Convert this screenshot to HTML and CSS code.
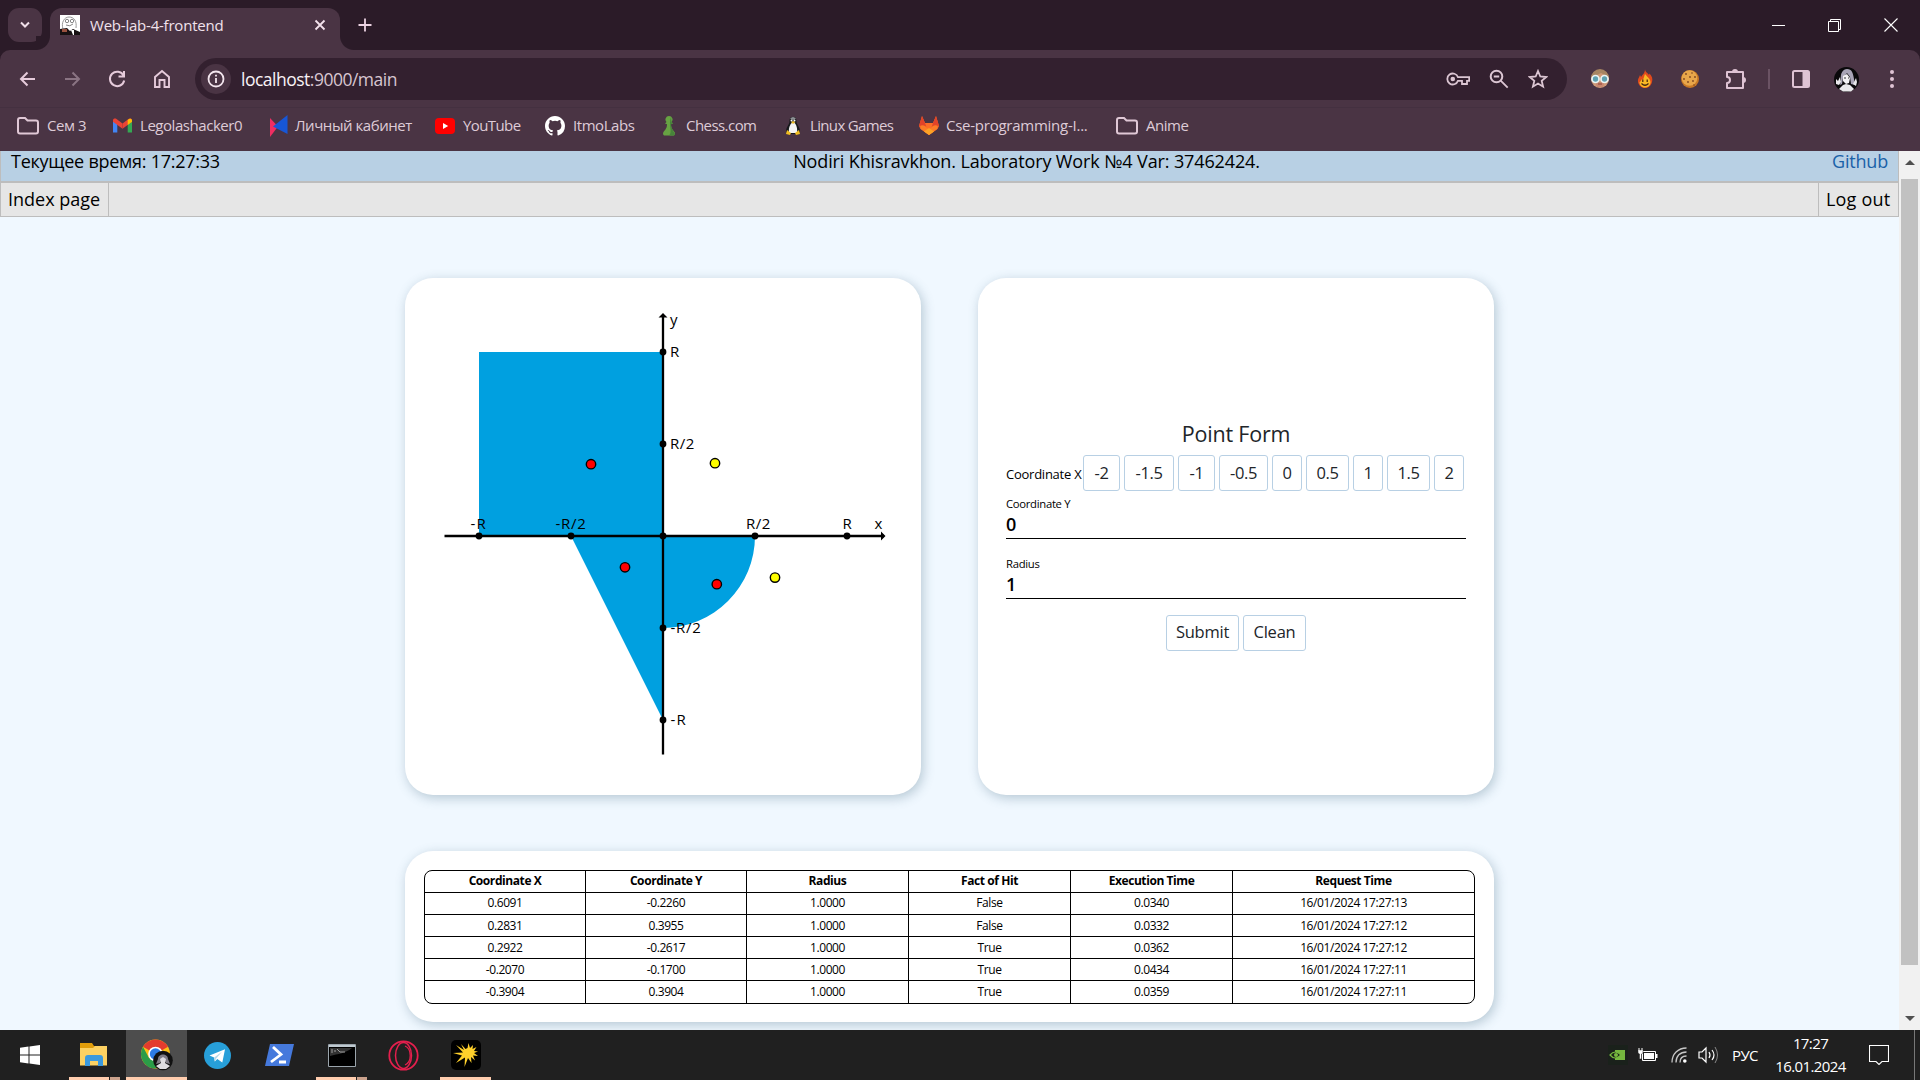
FILE: index.html
```html
<!DOCTYPE html>
<html lang="ru">
<head>
<meta charset="utf-8">
<title>Web-lab-4-frontend</title>
<link rel="stylesheet" href="styles.css">
</head>
<body>
<div class="tabstrip">
  <div class="tab-search"><svg width="12" height="8" viewBox="0 0 12 8"><path d="M2 1.500l4 4 4-4" fill="none" stroke="#f0dfe9" stroke-width="2"/></svg></div>
  <div class="tab">
    <svg class="favicon" width="20" height="20" viewBox="0 0 20 20"><path fill="#fff" d="M0 0h20v20H0z"/><path d="M3 14C1 8 4 2 9 2s8 4 7 11" fill="none" stroke="#999" stroke-width="1"/><circle cx="7" cy="6" r="1.700" fill="none" stroke="#888"/><circle cx="12" cy="6" r="1.700" fill="none" stroke="#888"/><path d="M6 10q4 2 7-1" stroke="#888" fill="none"/><path d="M0 14l7-1 3 3 3-2 7 3v3H0z" fill="#171113"/><path d="M2 14h5v3H2z" fill="#99513f"/><path d="M11 15l2 5h1v-5z" fill="#fff"/></svg>
    <span class="tab-title">Web-lab-4-frontend</span>
    <svg class="tab-close" width="12" height="12" viewBox="0 0 12 12"><path d="M1.500 1.500l9 9M10.500 1.500l-9 9" stroke="#f3e2ec" stroke-width="1.800"/></svg>
  </div>
  <svg class="new-tab" width="14" height="14" viewBox="0 0 14 14"><path d="M7 .5v13M.5 7h13" stroke="#ecd3e2" stroke-width="1.800"/></svg>
  <div class="window-buttons">
    <svg width="13" height="13" viewBox="0 0 13 13"><path d="M0 6.500h13" stroke="#fff"/></svg>
    <svg width="13" height="13" viewBox="0 0 13 13"><path d="M.5 2.500h10v10H.5zM2.500 2.500v-2h10v10h-2" fill="none" stroke="#fff"/></svg>
    <svg width="14" height="14" viewBox="0 0 14 14"><path d="M.5 .5l13 13M13.500 .5l-13 13" stroke="#fff" stroke-width="1.100"/></svg>
  </div>
</div>
<div class="toolbar">
  <div class="nav-icons">
    <svg width="20" height="20" viewBox="0 0 20 20"><path d="M18 10H4M10.500 3.500L4 10l6.500 6.500" fill="none" stroke="#e6cbdb" stroke-width="2"/></svg>
    <svg width="20" height="20" viewBox="0 0 20 20"><path d="M3 10h14M10.500 3.500L17 10l-6.500 6.500" fill="none" stroke="#8a7483" stroke-width="2"/></svg>
    <svg width="20" height="20" viewBox="0 0 20 20"><path d="M16.500 6.500A7.200 7.200 0 1 0 17.200 11.500M17 2v5.500h-5.500" fill="none" stroke="#e6cbdb" stroke-width="2"/></svg>
    <svg width="20" height="20" viewBox="0 0 20 20"><path d="M3 18V8l7-6 7 6v10h-4.500v-7h-5v7z" fill="none" stroke="#e6cbdb" stroke-width="1.900"/></svg>
  </div>
  <div class="omnibox">
    <div class="site-info"><svg width="18" height="18" viewBox="0 0 18 18"><circle cx="9" cy="9" r="7.500" fill="none" stroke="#f3e6ee" stroke-width="1.800"/><path d="M9 8v5M9 4.700v1.900" stroke="#f3e6ee" stroke-width="1.800"/></svg></div>
    <span class="url">localhost<span class="url-path">:9000/main</span></span>
    <div class="omni-icons">
      <svg width="24" height="16" viewBox="0 0 24 16"><path d="M12 6.200a5.500 5.500 0 1 0 0 3.600h4V13h5v-3.200h2.200V6.200z" fill="none" stroke="#dcc6d3" stroke-width="1.800"/><circle cx="6.800" cy="8" r="2.300" fill="#dcc6d3"/></svg>
      <svg width="20" height="20" viewBox="0 0 20 20"><circle cx="7.500" cy="7.500" r="5.800" fill="none" stroke="#dcc6d3" stroke-width="2"/><path d="M11.700 11.700l7 7M4.800 7.500h5.400" stroke="#dcc6d3" stroke-width="1.800"/></svg>
      <svg width="20" height="20" viewBox="0 0 20 20"><path d="M10 2l2.300 5.500 5.900.5-4.500 3.900 1.400 5.800L10 14.600l-5.100 3.100 1.400-5.800L1.800 8l5.900-.5z" fill="none" stroke="#dcc6d3" stroke-width="1.800"/></svg>
    </div>
  </div>
  <div class="extensions">
    <svg width="20" height="20" viewBox="0 0 20 20"><circle cx="10" cy="10" r="9" fill="#cf9a78"/><path d="M1 9a9 9 0 0 1 18 0l-2-2-6-3-8 4z" fill="#a78562"/><path d="M5 13h10l-2 5H7z" fill="#c7876f"/><circle cx="5.500" cy="10" r="3.500" fill="#5fa1b1" stroke="#e9f4f4" stroke-width="1.700"/><circle cx="14.500" cy="10" r="3.500" fill="#5fa1b1" stroke="#e9f4f4" stroke-width="1.700"/><path d="M8 15h4" stroke="#8d4138"/></svg>
    <svg width="20" height="20" viewBox="0 0 20 20"><path d="M10 0c0 3 3 4 4 6l.5-1.500C17 7 18 10 17 13c-1 4-4 6-7 6s-6-2-7-6c-.5-3 1-4 2-7l1 2c2-3 4-4 4-8z" fill="#e04a1c"/><path d="M10 5c3 4 6 5 5.500 9-.5 3-3 4.500-5.500 4.500S4.500 17 4.500 13c1 0 1.500-2 2.500-3l1 1z" fill="#f8b825"/><path d="M7.800 10.500v2.500M12.200 10.500v2.500M6.500 14.500q3.500 3.500 7 0" stroke="#412510" stroke-width="1.200" fill="none"/></svg>
    <svg width="20" height="20" viewBox="0 0 20 20"><circle cx="10" cy="10" r="9" fill="#c87825"/><circle cx="9.500" cy="9" r="7.800" fill="#e8a64a"/><g fill="#7d4520"><circle cx="6" cy="5" r=".9"/><circle cx="12" cy="4" r=".8"/><circle cx="10" cy="8" r=".9"/><circle cx="15" cy="8" r=".9"/><circle cx="4" cy="10" r=".9"/><circle cx="8" cy="13" r=".9"/><circle cx="13" cy="12" r=".9"/><circle cx="14" cy="16" r=".8"/></g></svg>
    <svg width="22" height="22" viewBox="0 0 22 22"><path d="M2 4h16v16H2v-5a3 3 0 0 0 0-6z" fill="none" stroke="#dfc3d4" stroke-width="2" stroke-linejoin="round"/><path d="M7 4a3 3 0 0 1 6 0zM18 9a3 3 0 0 1 0 6z" fill="#dfc3d4"/></svg>
    <span class="divider"></span>
    <svg width="18" height="18" viewBox="0 0 18 18"><rect x="1" y="1" width="16" height="16" rx="1.500" fill="none" stroke="#dfc3d4" stroke-width="2"/><path d="M10.500 1H17v16h-6.500z" fill="#dfc3d4"/></svg>
    <svg class="avatar" width="25" height="25" viewBox="0 0 25 25"><circle cx="12.500" cy="12.500" r="12.500" fill="#0a090b"/><path d="M7 13C6 6 9 2 13 2c5 0 6 4 7 10l1 6-4-1-1-7-3-4-4 5-1 6-2 1z" fill="#a8a4b6"/><path d="M9 9l4-2 3 4-1 5-3 1-3-3z" fill="#f2f1f4"/><path d="M5 22l4-4 3-1 4 1 4 4-3 2.500H9zM2 12l2 2 2-4 1 5-2 3-3-1zM22 11l1 4-1 4-3-2z" fill="#e9e8eb"/><path d="M10 11h2M14 11h1" stroke="#333"/></svg>
    <svg class="kebab" width="4" height="18" viewBox="0 0 4 18"><g fill="#dfc3d4"><circle cx="2" cy="2" r="2"/><circle cx="2" cy="9" r="2"/><circle cx="2" cy="16" r="2"/></g></svg>
  </div>
</div>
<div class="bookmarks">
  <div class="bm bm1"><svg width="22" height="18" viewBox="0 0 22 18"><path d="M1 3a2 2 0 0 1 2-2h5l2.500 2.500H19a2 2 0 0 1 2 2V14.500a2 2 0 0 1-2 2H3a2 2 0 0 1-2-2z" fill="none" stroke="#e0c8d6" stroke-width="2"/></svg><span>Сем 3</span></div>
  <div class="bm bm2"><svg width="19" height="15" viewBox="0 0 19 15"><path d="M0 2v12.500h4.300V5.500z" fill="#4285f4"/><path d="M19 2v12.500h-4.300V5.500z" fill="#34a853"/><path d="M0 2.500C0 .5 2 0 3.500 1l6 4.500v5.300L0 3.700z" fill="#ea4335"/><path d="M19 2.500C19 .5 17 0 15.500 1l-6 4.500v5.300L19 3.700z" fill="#ea4335"/><path d="M14.700 2v5L19 3.700C19.300.5 17 0 14.700 2z" fill="#fbbc04"/></svg><span>Legolashacker0</span></div>
  <div class="bm bm3"><svg width="19" height="22" viewBox="0 0 19 22"><path d="M1 3l8 8.500L1 22z" fill="#f02d62"/><path d="M18.500 0v19L4 11.500z" fill="#1756d6"/></svg><span>Личный кабинет</span></div>
  <div class="bm bm4"><svg width="20" height="16" viewBox="0 0 20 16"><rect width="20" height="16" rx="4" fill="#f00"/><path d="M8 5l5.200 3L8 11z" fill="#fff"/></svg><span>YouTube</span></div>
  <div class="bm bm5"><svg width="20" height="20" viewBox="0 0 16 16"><path fill="#fff" d="M8 0C3.580 0 0 3.580 0 8c0 3.540 2.290 6.530 5.470 7.590.4.070.55-.17.55-.38 0-.19-.01-.82-.01-1.490-2.010.37-2.530-.49-2.690-.94-.09-.23-.48-.94-.82-1.130-.28-.15-.68-.52-.01-.53.63-.01 1.080.58 1.230.82.72 1.210 1.870.87 2.330.66.07-.52.28-.87.51-1.070-1.780-.2-3.640-.89-3.640-3.950 0-.87.31-1.590.82-2.150-.08-.2-.36-1.020.08-2.120 0 0 .67-.21 2.200.82a7.600 7.600 0 0 1 4 0c1.530-1.040 2.200-.82 2.200-.82.44 1.100.16 1.920.08 2.120.51.56.82 1.270.82 2.150 0 3.070-1.870 3.750-3.650 3.950.29.25.54.73.54 1.480 0 1.070-.01 1.930-.01 2.200 0 .21.15.46.55.38A8 8 0 0 0 16 8c0-4.420-3.580-8-8-8z"/></svg><span>ItmoLabs</span></div>
  <div class="bm bm6"><svg width="14" height="20" viewBox="0 0 14 20"><path d="M7 0a3.500 3.500 0 0 1 2.500 6l1.500 1.500-2 .8c0 4 1.500 5 3.500 7.700.8 1.200.5 3-.5 3.500H2c-1-.5-1.300-2.300-.5-3.500C3.500 13.300 5 12.300 5 8.300l-2-.8L4.500 6A3.500 3.500 0 0 1 7 0z" fill="#67a343"/><path d="M9 1l.5 5 1.500 1.500-2 .8c0 4 2 6 4 9.700l-1 1.500H7C11 16 6 9 9 1z" fill="#47833a"/></svg><span>Chess.com</span></div>
  <div class="bm bm7"><svg width="16" height="18" viewBox="0 0 16 18"><path d="M8 0c3 0 3.500 2 3.500 5 0 2 3.500 5 3.500 10l-3 2H4l-3-2C1 10 4.500 7 4.500 5 4.500 2 5 0 8 0z" fill="#16191b"/><path d="M8 5c2 0 5 5 4 11H4C3 10 6 6 8 5z" fill="#f5f5f5"/><path d="M6 5l2-1 2.500 1L8 7z" fill="#efbd2a"/><path d="M5 1.500q3-3 6 0L8 3z" fill="#8e9296"/><circle cx="6.500" cy="3.500" r="1" fill="#fff"/><circle cx="9.500" cy="3.500" r="1" fill="#fff"/><path d="M2 13l4 3-1 2-4-1zM14 13l-4 3 1 2 4-1z" fill="#f1bd22"/></svg><span>Linux Games</span></div>
  <div class="bm bm8"><svg width="20" height="19" viewBox="0 0 20 19"><path d="M3 0l3 7h8l3-7 3 10-1.500 3L10 19l-8.500-6L0 10z" fill="#fc6d26"/><path d="M3 0l3 7 4 12L0 10zM17 0l-3 7-4 12 10-9z" fill="#e24329"/><path d="M1 10c3-2 6 0 9 4 3-4 6-6 9-4l-1 3-8 6-8-6z" fill="#fc7d26"/><path d="M5 15.500L10 12l5 3.500-5 3.500z" fill="#fca326"/></svg><span>Cse-programming-I...</span></div>
  <div class="bm bm9"><svg width="22" height="18" viewBox="0 0 22 18"><path d="M1 3a2 2 0 0 1 2-2h5l2.500 2.500H19a2 2 0 0 1 2 2V14.500a2 2 0 0 1-2 2H3a2 2 0 0 1-2-2z" fill="none" stroke="#e0c8d6" stroke-width="2"/></svg><span>Anime</span></div>
</div>
<div class="viewport">
  <div class="page">
    <header class="site-header">
      <span class="clock">Текущее время: 17:27:33</span>
      <span class="author">Nodiri Khisravkhon. Laboratory Work №4 Var: 37462424.</span>
      <a class="github">Github</a>
    </header>
    <nav class="menu"><a class="menu-index">Index page</a><a class="menu-logout">Log out</a></nav>
    <main>
      <section class="card plot">
        <svg width="516" height="517" viewBox="405 278 516 517">
          <path d="M479 352h184v184H479zM571 536h92v184zM663 536h92a92 92 0 0 1-92 92z" fill="#00a0e0"/>
          <path d="M444.500 536H884M663 754.500V315" stroke="#000" stroke-width="2.300"/>
          <path d="M881 531.500l4.500 4.500-4.500 4.500zM658.500 317.500l4.500-4.500 4.500 4.500z"/>
          <g><circle cx="479" cy="536" r="3.400"/><circle cx="571" cy="536" r="3.400"/><circle cx="663" cy="536" r="3.400"/><circle cx="755" cy="536" r="3.400"/><circle cx="847" cy="536" r="3.400"/><circle cx="663" cy="352" r="3.400"/><circle cx="663" cy="444" r="3.400"/><circle cx="663" cy="628" r="3.400"/><circle cx="663" cy="720" r="3.400"/></g>
          <g class="axis-text"><text x="470.500" y="529" textLength="15">-R</text><text x="555.500" y="529" textLength="30">-R/2</text><text x="746" y="529" textLength="24">R/2</text><text x="842.500" y="529">R</text><text x="874.500" y="529">x</text><text x="670" y="325">y</text><text x="670" y="357">R</text><text x="670" y="449" textLength="24">R/2</text><text x="670.500" y="633" textLength="30">-R/2</text><text x="670.500" y="725" textLength="15">-R</text></g>
          <g stroke="#000" stroke-width="1.400"><g fill="#f00"><circle cx="591" cy="464.200" r="4.700"/><circle cx="625" cy="567.300" r="4.700"/><circle cx="716.800" cy="584.200" r="4.700"/></g><g fill="#ff0"><circle cx="715" cy="463.200" r="4.700"/><circle cx="775" cy="577.600" r="4.700"/></g></g>
        </svg>
      </section>
      <section class="card form">
        <h1>Point Form</h1>
        <div class="x-row"><label>Coordinate X</label><div class="x-buttons"><button>-2</button><button>-1.5</button><button>-1</button><button>-0.5</button><button>0</button><button>0.5</button><button>1</button><button>1.5</button><button>2</button></div></div>
        <div class="field"><label>Coordinate Y</label><div class="value">0</div></div>
        <div class="field field-radius"><label>Radius</label><div class="value">1</div></div>
        <div class="actions"><button>Submit</button><button>Clean</button></div>
      </section>
      <section class="card results">
        <div class="table">
          <div class="row head"><b>Coordinate X</b><b>Coordinate Y</b><b>Radius</b><b>Fact of Hit</b><b>Execution Time</b><b>Request Time</b></div>
          <div class="row"><span>0.6091</span><span>-0.2260</span><span>1.0000</span><span>False</span><span>0.0340</span><span>16/01/2024 17:27:13</span></div>
          <div class="row"><span>0.2831</span><span>0.3955</span><span>1.0000</span><span>False</span><span>0.0332</span><span>16/01/2024 17:27:12</span></div>
          <div class="row"><span>0.2922</span><span>-0.2617</span><span>1.0000</span><span>True</span><span>0.0362</span><span>16/01/2024 17:27:12</span></div>
          <div class="row"><span>-0.2070</span><span>-0.1700</span><span>1.0000</span><span>True</span><span>0.0434</span><span>16/01/2024 17:27:11</span></div>
          <div class="row"><span>-0.3904</span><span>0.3904</span><span>1.0000</span><span>True</span><span>0.0359</span><span>16/01/2024 17:27:11</span></div>
        </div>
      </section>
    </main>
  </div>
  <div class="scrollbar">
    <svg width="10" height="5" viewBox="0 0 10 5"><path d="M0 5l5-5 5 5z" fill="#505050"/></svg>
    <div class="thumb"></div>
    <svg width="10" height="5" viewBox="0 0 10 5"><path d="M0 0l5 5 5-5z" fill="#505050"/></svg>
  </div>
</div>
<div class="taskbar">
  <div class="apps">
    <div class="app start"><svg width="20" height="20" viewBox="0 0 20 20"><path d="M0 2.800l8.500-1.200V9.500H0zM9.500 1.500L20 0v9.500H9.500zM0 10.500h8.500v8L0 17.300zM9.500 10.500H20V20L9.500 18.600z" fill="#fff"/></svg></div>
    <div class="app files open stacked"><svg width="28" height="24" viewBox="0 0 28 24"><path d="M0 0h12l2 3h13v10H0z" fill="#e19d0a"/><path d="M0 5h13l2-2h12v19.500H0z" fill="#fcd162"/><path d="M5 23v-8q0-3 3-3h12q3 0 3 3v8h-5v-5H10v5z" fill="#3b99dd"/></svg></div>
    <div class="app active"><svg width="34" height="32" viewBox="0 0 34 32"><circle cx="15.500" cy="15" r="14.500" fill="#fbc016"/><path d="M15.500 15L3 7.700A14.500 14.500 0 0 1 28 7.700z" fill="#e33b2e"/><path d="M3 7.700A14.500 14.500 0 0 0 15.500 29.500l7-10.500L9 19z" fill="#2b9c48"/><circle cx="15.500" cy="15" r="7.300" fill="#fff"/><circle cx="15.500" cy="15" r="5.700" fill="#2c7be5"/><circle cx="23" cy="21.500" r="9.800" fill="#111"/><path d="M18 20c0-6 10-6 10 0l2 5-4-1-3-5-3 5-4 1z" fill="#7f7c85"/><path d="M20 20l3-2 3 2-1 4h-4zM16 27l5-3h4l5 3-4 3h-6z" fill="#dedce0"/></svg></div>
    <div class="app"><svg width="27" height="27" viewBox="0 0 27 27"><circle cx="13.500" cy="13.500" r="13.500" fill="#279fd9"/><path d="M5.500 13.500L21 7.200l-2.700 13.300-5-3.500-2.500 2.500-.7-4z" fill="#fff"/><path d="M10.200 15.500l8-6-6 7-1.400 3z" fill="#b6d8e9"/></svg></div>
    <div class="app"><svg width="29" height="22" viewBox="0 0 29 22"><path d="M5 0h24l-5 22H0z" fill="#4579dc"/><path d="M8 3l8 7.500L6 18M14 18h7" fill="none" stroke="#fff" stroke-width="2.800"/></svg></div>
    <div class="app open stacked"><svg width="28" height="23" viewBox="0 0 28 23"><path d="M.5 .5h27v22H.5z" fill="#000" stroke="#9ba5ac"/><path d="M1 1h26v2H1z" fill="#bfc9d0"/><path d="M2 4h22C18 9 10 10 2 12z" fill="#333"/><path d="M3 6h2M3 8h2M7 6v2M9 5l3 3M12 8h5" stroke="#bbb" stroke-width=".8"/></svg></div>
    <div class="app"><svg width="31" height="31" viewBox="0 0 31 31"><g fill="none" stroke="#e41f4d"><circle cx="15.500" cy="15.500" r="14.200" stroke-width="1.800"/><ellipse cx="15.500" cy="15.500" rx="8" ry="13" stroke-width="1.500"/><path d="M17 6c7 3 7 16 0 19" stroke-width="1.300"/></g></svg></div>
    <div class="app open last"><svg width="30" height="30" viewBox="0 0 30 30"><rect width="30" height="30" rx="5" fill="#000"/><path d="M16.500 8l1-5 1.500 5 3-3-.5 4 4-2-2.500 4 4 .5-4 1.500 4 3-5-.5 2 5-4-3.500.5 6-3.500-5-3.500 9 .5-9.500L5 23l6-7.500-9-2.500 10-.5L5 5l8 5-3-6 4.500 5z" fill="#ffd02b"/></svg></div>
  </div>
  <div class="tray">
    <svg class="nv" width="20" height="20" viewBox="0 0 20 20"><path fill="#1a211b" d="M0 0h20v20H0z"/><path d="M7 5h10v10H7z" fill="#76b83f"/><path d="M2 10q5-6 11 0-6 6-11 0z" fill="#1d2519" stroke="#76b83f" stroke-width="1.200"/><circle cx="8" cy="10" r="2" fill="#76b83f"/></svg>
    <svg class="bat" width="20" height="14" viewBox="0 0 20 14"><path d="M4.500 3.500h13v9h-13z" fill="none" stroke="#fff"/><path d="M6 5h10v6H6zM18 6h1.500v4H18z" fill="#fff"/><path d="M0 2h5v3L3.500 6v5h-2V6L0 5z" fill="#fff" stroke="#202020" stroke-width=".5"/><path d="M1 0v3M4 0v3" stroke="#fff"/></svg>
    <svg class="wifi" width="16" height="16" viewBox="0 0 16 16"><g fill="none" stroke="#c8c8c8" stroke-width="1.300"><path d="M1 15.500C1 7 7 1 15.500 1M5 15.500C5 9 9 5 15.500 5M9 15.500Q9 9 15.500 9"/></g><circle cx="13.800" cy="14" r="1.800" fill="#fff"/></svg>
    <svg class="vol" width="21" height="18" viewBox="0 0 21 18"><path d="M1 6h3l4-4v14l-4-4H1z" fill="none" stroke="#fff" stroke-width="1.200"/><path d="M11 6q2 3 0 6M14 4q4 5 0 10" stroke="#fff" fill="none" stroke-width="1.200"/><path d="M17 1q5 8 0 16" stroke="#888" fill="none"/></svg>
    <span class="lang">РУС</span>
    <div class="datetime"><span class="time">17:27</span><span class="date">16.01.2024</span></div>
    <svg class="notif" width="20" height="20" viewBox="0 0 20 20"><path d="M.5 .5h19v16H13l-3 3-3-3H.5z" fill="none" stroke="#fff" stroke-width="1.100"/></svg>
  </div>
</div>
</body>
</html>
```
FILE: styles.css
```css
* { box-sizing: border-box; }
body { margin: 0; width: 1920px; height: 1080px; overflow: hidden; display: flex; flex-direction: column; background: #2b1b28; font-family: "Open Sans", "Noto Sans", sans-serif; color: #000; }
svg { display: block; flex: none; }
span, a, label, b, button { white-space: nowrap; }

.tabstrip { height: 50px; background: #2b1b28; display: flex; align-items: flex-start; }
.tab-search { width: 34px; height: 34px; margin: 8px 8px 0; border-radius: 11px; background: #4a3444; display: flex; align-items: center; justify-content: center; }
.tab { width: 290px; height: 42px; margin-top: 8px; padding: 0 14px 8px 10px; border-radius: 12px 12px 0 0; background: #4a3444; display: flex; align-items: center; position: relative; }
.tab::before, .tab::after { content: ""; position: absolute; bottom: 0; width: 14px; height: 14px; }
.tab::before { left: -14px; background: radial-gradient(circle at 0 0, #2b1b28 13.5px, #4a3444 14.5px); }
.tab::after { right: -14px; background: radial-gradient(circle at 100% 0, #2b1b28 13.5px, #4a3444 14.5px); }
.tab-title { margin-left: 10px; font-size: 15px; letter-spacing: -0.22px; color: #f1e2ec; flex: 1; }
.new-tab { margin: 18px 0 0 18px; }
.window-buttons { margin: 18px 22px 0 auto; display: flex; gap: 43px; align-items: center; }

.toolbar { height: 58px; padding: 8px 16px 0 17px; border-radius: 10px 10px 0 0; background: #4a3444; box-shadow: inset 0 -1px #443040; display: flex; align-items: flex-start; }
.nav-icons { height: 42px; width: 178px; display: flex; align-items: center; gap: 25px; }
.omnibox { width: 1372px; height: 42px; border-radius: 21px; background: #33202f; display: flex; align-items: center; padding: 0 19px 0 6px; }
.site-info { width: 30px; height: 30px; border-radius: 50%; background: #4a3444; display: flex; align-items: center; justify-content: center; }
.url { margin-left: 10px; font-size: 17.5px; letter-spacing: -0.5px; color: #f9f2f6; flex: 1; }
.url-path { color: #d8c6d1; }
.omni-icons { display: flex; align-items: center; gap: 19px; }
.extensions { height: 42px; flex: 1; padding-left: 23px; display: flex; align-items: center; gap: 25px; }
.divider { width: 2px; height: 20px; background: #6b5364; margin: 0 -3px 0 -4px; }
.avatar { margin-left: -1px; }
.kebab { margin-left: 6px; }

.bookmarks { height: 43px; background: #4a3444; display: flex; padding-left: 17px; color: #decbd7; font-size: 15px; }
.bm { height: 35px; display: flex; align-items: center; gap: 8px; letter-spacing: -0.45px; }
.bm span { padding-bottom: 2px; }
.bm1 { width: 96px; gap: 8px; } .bm2 { width: 156px; } .bm3 { width: 166px; gap: 7px; } .bm4 { width: 110px; } .bm5 { width: 116px; }
.bm4 span { letter-spacing: -0.6px; }
.bm6 { width: 123px; margin-left: 1px; gap: 10px; letter-spacing: -0.55px; } .bm7 { width: 134px; gap: 9px; letter-spacing: -0.65px; } .bm8 { width: 197px; gap: 7px; letter-spacing: -0.25px; }

.viewport { height: 879px; display: flex; background: #f0f8ff; }
.page { width: 1899px; height: 879px; }
.site-header { height: 32px; background: #b8d0e4; border: 1px solid #bdbdbd; border-width: 0 1px 2px; display: grid; grid-template-columns: 1fr auto 1fr; padding: 0 10px; font-size: 18px; line-height: 21px; }
.clock { letter-spacing: -0.25px; }
.author { letter-spacing: -0.13px; position: relative; left: 77px; }
.github { justify-self: end; color: #1a61a8; letter-spacing: -0.2px; }
.menu { height: 34px; background: #e6e6e6; border: 1px solid #bdbdbd; border-top: 0; display: flex; justify-content: space-between; font-size: 18px; line-height: 33px; }
.menu-index { width: 108px; padding-left: 7px; border-right: 1px solid #bdbdbd; letter-spacing: 0; }
.menu-logout { width: 80px; padding-left: 7px; border-left: 1px solid #bdbdbd; letter-spacing: 0.2px; }
main { width: 1089px; margin: 61px 0 0 405px; display: grid; grid-template-columns: 516px 516px; gap: 56px 57px; }
.card { background: #fff; border-radius: 28px; box-shadow: 2px 3px 12px rgba(60, 100, 120, .33); }
.plot { height: 517px; }
.axis-text { font-size: 15px; letter-spacing: -0.3px; }
.form { height: 517px; padding: 140px 28px 0; }
.form h1 { margin: 0; height: 37px; line-height: 32px; font-size: 21.5px; font-weight: 400; letter-spacing: -0.2px; text-align: center; color: #212529; }
.x-row { height: 36px; display: flex; align-items: center; }
.x-row label { width: 77px; padding-top: 2px; font-size: 13px; letter-spacing: -0.25px; }
.x-buttons { display: flex; gap: 4px; }
button { height: 36px; padding: 0 0 2px; border: 1px solid #b8d0e4; border-radius: 3px; background: #fff; color: #212529; font: 16.5px "Open Sans", sans-serif; letter-spacing: -0.4px; }
.x-buttons button { width: 30px; }
.x-buttons button:nth-child(1), .x-buttons button:nth-child(3) { width: 37px; }
.x-buttons button:nth-child(2) { width: 50px; }
.x-buttons button:nth-child(4) { width: 49px; }
.x-buttons button:nth-child(6), .x-buttons button:nth-child(8) { width: 43px; }
.field { height: 48px; border-bottom: 1px solid #000; }
.field label { display: block; padding-top: 4px; height: 22px; line-height: 18px; font-size: 11.3px; letter-spacing: -0.3px; }
.field .value { font-size: 18px; line-height: 22px; font-weight: 600; }
.field-radius { margin-top: 12px; }
.actions { margin-top: 16px; display: flex; justify-content: center; gap: 4px; }
.actions button { letter-spacing: -0.25px; padding-bottom: 3px; }
.actions button:first-child { width: 73px; }
.actions button:last-child { width: 63px; }
.results { grid-column: 1 / 3; height: 171px; padding: 19px; }
.table { height: 134px; border: 1px solid #000; border-radius: 8px; display: grid; grid-template-rows: repeat(6, 22px); font-size: 12px; letter-spacing: -0.4px; }
.row { display: grid; grid-template-columns: 160px 161px 162px 162px 162px 1fr; border-bottom: 1px solid #000; line-height: 20px; text-align: center; }
.row:nth-child(n + 3) { line-height: 22px; }
.row:last-child { border-bottom: 0; }
.row > * + * { border-left: 1px solid #000; }
.row b { font-weight: 700; letter-spacing: -0.42px; }

.scrollbar { width: 21px; background: #f1f1f1; display: flex; flex-direction: column; align-items: center; padding: 9px 0 9px; }
.thumb { width: 17px; height: 786px; margin: 14px 0 auto; background: #c1c1c1; }

.taskbar { height: 50px; background: #202020; display: flex; justify-content: space-between; }
.apps { display: flex; }
.app { width: 62px; height: 50px; display: flex; align-items: center; justify-content: center; padding-right: 1px; position: relative; }
.start { width: 61px; margin-right: 3px; }
.files { padding-right: 3px; }
.open::after { content: ""; position: absolute; left: 5px; right: 6px; bottom: 0; height: 3px; background: #ffcdae; }
.stacked::after { background: linear-gradient(90deg, #ffcdae 40px, #222 40px, #222 41px, #cba28c 41px); }
.active { background: #4d4d4d; box-shadow: inset 0 -3px #ffcdae; width: 61px; padding: 0 0 0 1px; }
.tray { display: flex; align-items: center; color: #fff; width: 312px; box-shadow: inset -5px 0 #202020, inset -6px 0 #777; }
.bat { margin-left: 10px; }
.wifi { margin-left: 13px; }
.vol { margin-left: 11px; }
.lang { margin-left: 13px; font-size: 15px; letter-spacing: -0.6px; width: 44px; }
.datetime { width: 69px; display: flex; flex-direction: column; align-items: center; font-size: 15px; line-height: 23px; letter-spacing: -0.6px; }
.notif { margin-left: 24px; }
```
